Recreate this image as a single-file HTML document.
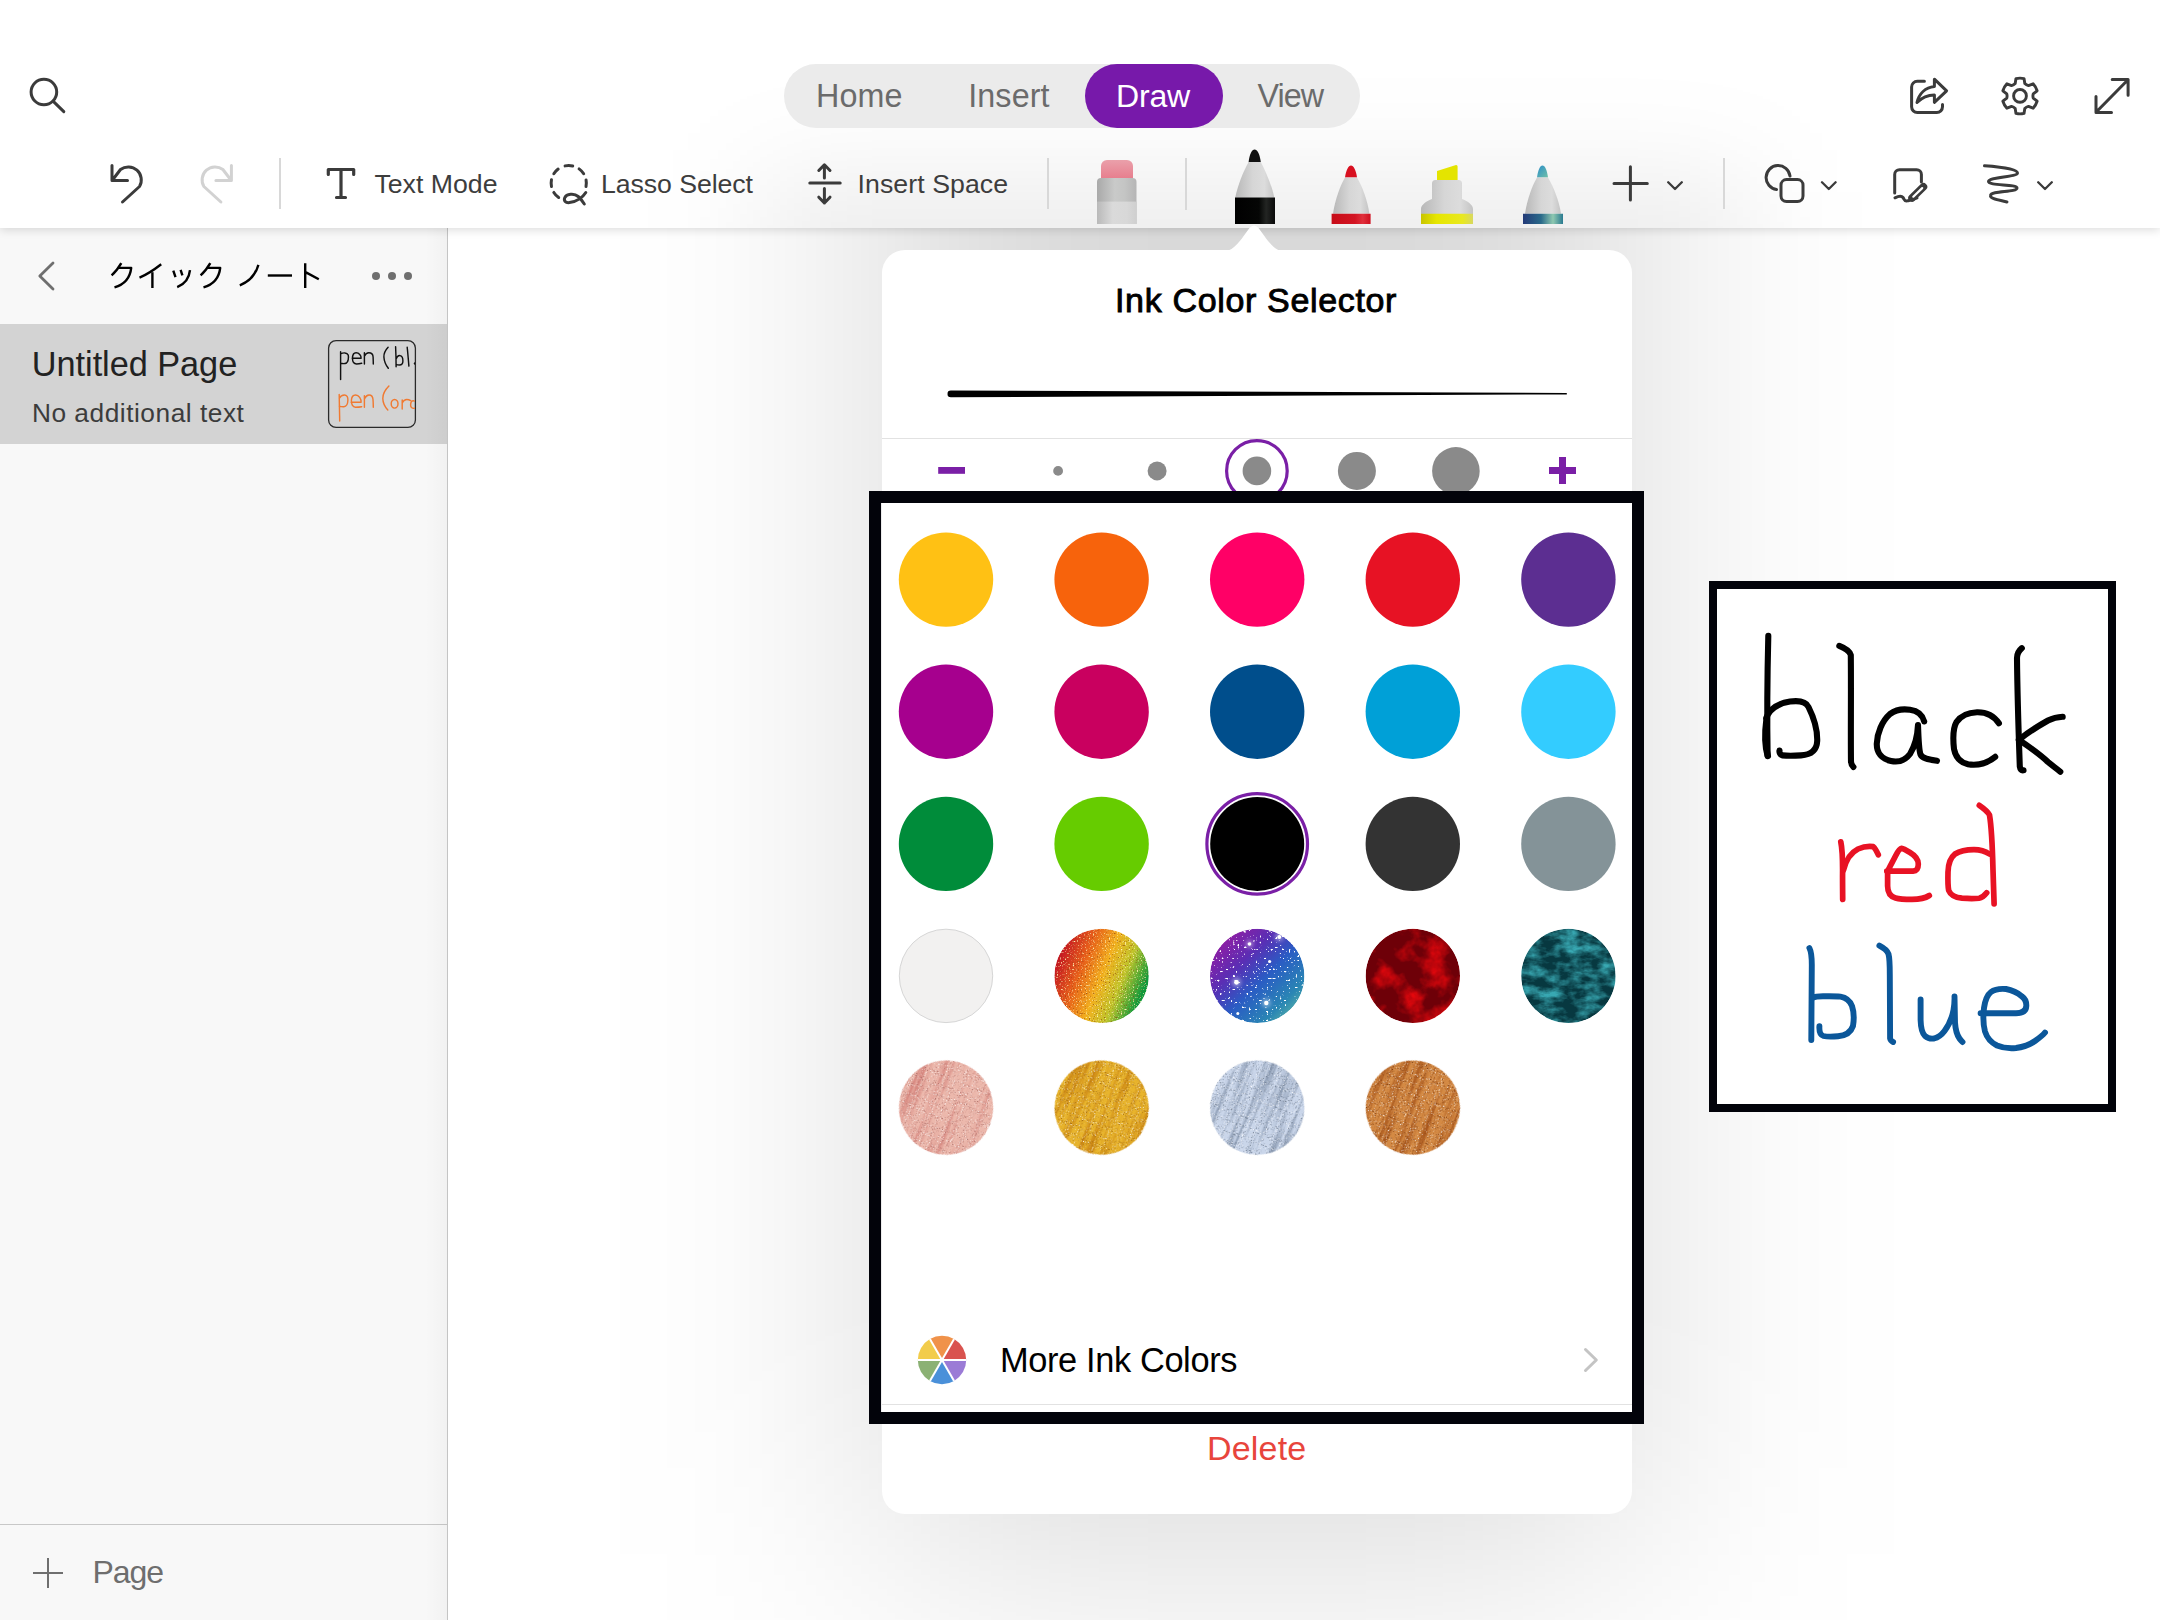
<!DOCTYPE html>
<html><head><meta charset="utf-8">
<style>
html,body{margin:0;padding:0;width:2160px;height:1620px;overflow:hidden;background:#fff;}
*{box-sizing:border-box;}
.abs{position:absolute;}
#toolbar{position:absolute;left:0;top:0;width:2160px;height:228px;background:#fff;box-shadow:0 2px 9px rgba(0,0,0,0.14);z-index:2;overflow:hidden;}
#haze{position:absolute;left:760px;top:190px;width:990px;height:120px;background:rgba(0,0,0,0.09);filter:blur(60px);}
#sidebar{position:absolute;left:0;top:228px;width:448px;height:1392px;background:#f8f8f8;border-right:1px solid #c4c4c4;z-index:1;}
#sel{position:absolute;left:0;top:96px;width:447px;height:120px;background:#d3d3d3;}
#sep{position:absolute;left:0;top:1296px;width:447px;height:1px;background:#c8c8c8;}
#shadow{position:absolute;left:882px;top:-300px;width:750px;height:1855px;background:rgba(0,0,0,0.15);filter:blur(130px);z-index:1;}
#pop{position:absolute;left:882px;top:250px;width:750px;height:1264px;border-radius:23px;background:#fff;z-index:4;}
svg{position:absolute;left:0;top:0;}
text{font-family:"Liberation Sans",sans-serif;}
</style></head>
<body>
<div id="toolbar"><div id="haze"></div></div>
<div id="sidebar"><div id="sel"></div><div id="sep"></div><div style="position:absolute;right:0;top:0;width:22px;height:1392px;background:linear-gradient(to right,rgba(0,0,0,0),rgba(0,0,0,0.028))"></div></div>
<div id="shadow"></div>
<div id="pop"></div>

<svg width="2160" height="1620" viewBox="0 0 2160 1620" style="z-index:5">

<!-- ===== toolbar icons ===== -->
<g fill="none" stroke="#3b3b3b" stroke-width="3" stroke-linecap="round" stroke-linejoin="round">
<circle cx="43.9" cy="92" r="12.8"/>
<path d="M53.3,101.4 L63.8,111.6"/>
<path d="M112,165.5 V180.5 H127.5 M112.5,180 L120.5,169.5 A13,13 0 0 1 139.5,186.5 L122.5,202"/>
<path d="M328.3,174.5 V169.5 H353.7 V174.5 M341,169.5 V197.5 M336.5,197.5 H345.5" stroke-width="3.2"/>
<path d="M565.09,165.88 A17.6,17.6 0 0 1 572.71,165.95 M579.10,168.86 A17.6,17.6 0 0 1 583.68,173.77 M586.08,180.04 A17.6,17.6 0 0 1 586.03,186.46 M553.82,173.77 A17.6,17.6 0 0 1 558.16,169.04 M551.47,186.46 A17.6,17.6 0 0 1 551.47,179.74 M558.66,197.52 A17.6,17.6 0 0 1 553.82,192.43"/>
<path d="M824.4,165 V178 M818.8,170.5 L824.4,164.8 L830,170.5 M809.8,183.1 H840.2 M824.4,188.5 V203 M818.8,197.2 L824.4,203 L830,197.2"/>
<path d="M1614,183.4 H1647.3 M1630.4,166.8 V200"/>
<path d="M1668.2,182.2 L1675,189 L1681.8,182.2 M1822,182.2 L1828.8,189 L1835.6,182.2 M2038.2,182.2 L2045,189 L2051.8,182.2" stroke-width="2.3"/>
<path d="M1776.5,189.5 A12,12 0 1 1 1790,176"/>
<rect x="1781" y="179.6" width="22" height="22" rx="5.5"/>
<path d="M1921.4,182 V174.5 A4.8,4.8 0 0 0 1916.6,169.7 H1899.5 A4.8,4.8 0 0 0 1894.7,174.5 V193"/>
<path d="M1895,197.8 C1898.5,196 1901.5,195.5 1903,197.5 C1904.5,199.5 1904,201.5 1907.5,200.8 C1911,200 1914,199.5 1917,198"/>
<path d="M1912,198 L1923.5,186.8" stroke-width="7.5"/>
<path d="M1913.3,196.7 L1922.2,188.1" stroke="#fff" stroke-width="2.2"/>
<path d="M1984.5,165.8 C2003,167 2017.5,169.5 2017.5,173 C2017.5,177 1989,177 1988.5,181.5 C1988,186 2017,184 2017,188 C2017,192.5 1991,190.5 1990.5,195.5 C1990,199 1999,200 2007,202"/>
<path d="M1924.4,81.3 H1917.3 A5.7,5.7 0 0 0 1911.6,87 V106.8 A5.7,5.7 0 0 0 1917.3,112.5 H1936.8 A5.7,5.7 0 0 0 1942.5,106.8 V104.5"/>
<path d="M1917,102.5 C1919,93.5 1925.5,87.5 1934.4,86.5 V79.2 L1946.6,90.8 L1934.4,102.3 V95 C1927,95 1921.5,98 1917,102.5 Z"/>
<path d="M2015.20,83.49 L2015.97,78.56 A17.9,17.9 0 0 1 2024.03,78.56 L2024.80,83.49 A7.2,7.2 0 0 0 2028.43,85.59 L2028.43,85.59 L2033.09,83.79 A17.9,17.9 0 0 1 2037.12,90.77 L2033.24,93.90 A7.2,7.2 0 0 0 2033.24,98.10 L2033.24,98.10 L2037.12,101.23 A17.9,17.9 0 0 1 2033.09,108.21 L2028.43,106.41 A7.2,7.2 0 0 0 2024.80,108.51 L2024.80,108.51 L2024.03,113.44 A17.9,17.9 0 0 1 2015.97,113.44 L2015.20,108.51 A7.2,7.2 0 0 0 2011.57,106.41 L2011.57,106.41 L2006.91,108.21 A17.9,17.9 0 0 1 2002.88,101.23 L2006.76,98.10 A7.2,7.2 0 0 0 2006.76,93.90 L2006.76,93.90 L2002.88,90.77 A17.9,17.9 0 0 1 2006.91,83.79 L2011.57,85.59 A7.2,7.2 0 0 0 2015.20,83.49 Z" stroke-width="2.9"/>
<circle cx="2020" cy="95.9" r="6.4" stroke-width="2.9"/>
<path d="M2096.5,111.8 L2127.5,80.2 M2112.2,79.6 H2128.1 V95.2 M2096,96.6 V112.4 H2111.5"/>
</g>
<path d="M231.4,165.5 V180.5 H215.9 M230.9,180 L222.9,169.5 A13,13 0 0 0 203.9,186.5 L220.9,202" fill="none" stroke="#d2d2d2" stroke-width="3" stroke-linecap="round" stroke-linejoin="round"/>
<path d="M585.8,192.5 C582,198.5 575,201.8 569.5,202.6 C565.5,203.2 563.5,200.5 564.8,197.6 C566.5,194 574,192.8 578.2,196.5 C580.5,198.6 582.6,201.4 584.3,204" fill="none" stroke="#3b3b3b" stroke-width="3" stroke-linecap="round"/>
<g fill="#d8d8d8">
<rect x="279" y="158" width="2" height="51"/>
<rect x="1047" y="158" width="2" height="51"/>
<rect x="1185" y="158" width="2" height="52"/>
<rect x="1723" y="158" width="2" height="51"/>
</g>

<!-- ===== pens ===== -->
<defs>
<linearGradient id="gEr" x1="0" y1="0" x2="1" y2="0">
<stop offset="0" stop-color="#a9a9a9"/><stop offset="0.45" stop-color="#c9cac9"/><stop offset="0.7" stop-color="#c4c5c4"/><stop offset="1" stop-color="#b5b5b5"/></linearGradient>
<linearGradient id="gEr2" x1="0" y1="0" x2="1" y2="0">
<stop offset="0" stop-color="#b9b9b9"/><stop offset="0.4" stop-color="#dadada"/><stop offset="0.75" stop-color="#d8d8d8"/><stop offset="1" stop-color="#cfcfcf"/></linearGradient>
<linearGradient id="gPink" x1="0" y1="0" x2="0" y2="1">
<stop offset="0" stop-color="#eaa0aa"/><stop offset="1" stop-color="#e77d8d"/></linearGradient>
<linearGradient id="gCone" x1="0" y1="0" x2="1" y2="0">
<stop offset="0" stop-color="#b8b8b8"/><stop offset="0.45" stop-color="#d6d6d6"/><stop offset="0.75" stop-color="#dcdcdc"/><stop offset="1" stop-color="#c4c4c4"/></linearGradient>
<linearGradient id="gBlk" x1="0" y1="0" x2="1" y2="0">
<stop offset="0" stop-color="#000"/><stop offset="0.6" stop-color="#050605"/><stop offset="0.78" stop-color="#232523"/><stop offset="1" stop-color="#0a0a0a"/></linearGradient>
<linearGradient id="gRed" x1="0" y1="0" x2="1" y2="0">
<stop offset="0" stop-color="#c70c18"/><stop offset="0.6" stop-color="#d31523"/><stop offset="0.8" stop-color="#e0303c"/><stop offset="1" stop-color="#cf1020"/></linearGradient>
<linearGradient id="gYel" x1="0" y1="0" x2="1" y2="0">
<stop offset="0" stop-color="#c8c400"/><stop offset="0.3" stop-color="#e6e600"/><stop offset="0.8" stop-color="#e8e820"/><stop offset="1" stop-color="#d8d860"/></linearGradient>
<linearGradient id="gGal" x1="0" y1="0" x2="1" y2="0">
<stop offset="0" stop-color="#233a78"/><stop offset="0.45" stop-color="#2a6a8a"/><stop offset="0.75" stop-color="#8ec8b0"/><stop offset="1" stop-color="#2a7a90"/></linearGradient>
<linearGradient id="gGalTip" x1="0" y1="0" x2="1" y2="1">
<stop offset="0" stop-color="#2a8ec8"/><stop offset="1" stop-color="#70c0a8"/></linearGradient>
</defs>
<path d="M1101,179 V166 A6,6 0 0 1 1107,160 H1127 A6,6 0 0 1 1133,166 V179 Z" fill="url(#gPink)"/>
<path d="M1097,224 V182 A4,4 0 0 1 1101,178 H1132.5 A4,4 0 0 1 1136.5,182 V224 Z" fill="url(#gEr)"/>
<rect x="1097" y="201.6" width="39.5" height="22.4" fill="url(#gEr2)"/>
<path d="M1248.6,162.2 C1249.5,154 1252,149.5 1254.6,149.5 C1257.2,149.5 1259.8,154 1260.8,162.2 Z" fill="#111"/>
<path d="M1248.6,162 H1260.8 C1266,172 1272,186 1274.3,197.8 H1235.2 C1237.5,186 1243,172 1248.6,162 Z" fill="url(#gCone)"/>
<rect x="1235" y="197.5" width="40" height="26.5" fill="url(#gBlk)"/>
<path d="M1345,177.5 C1346,170 1348.5,165.5 1351,165.5 C1353.5,165.5 1356,170 1357,177.5 Z" fill="#d81020"/>
<path d="M1345,177.5 H1357 C1362,186 1367.5,200 1369.4,213.8 H1333 C1335,200 1340,186 1345,177.5 Z" fill="url(#gCone)"/>
<rect x="1331.6" y="213.75" width="39" height="10.25" fill="url(#gRed)"/>
<path d="M1437,180.5 V171 L1456,165 A1.5,1.5 0 0 1 1457.6,166.5 V180.5 Z" fill="#e4e400"/>
<path d="M1432,199 V183.5 A3.5,3.5 0 0 1 1435.5,180 H1458.5 A3.5,3.5 0 0 1 1462,183.5 V199 C1467,201 1473,204.5 1473,209 V214 H1421 V209 C1421,204.5 1427,201 1432,199 Z" fill="url(#gCone)"/>
<rect x="1421" y="213.75" width="52" height="10.25" fill="url(#gYel)"/>
<path d="M1537,177.5 C1538,170 1540,165.5 1542.5,165.5 C1545,165.5 1547,170 1548,177.5 Z" fill="url(#gGalTip)"/>
<path d="M1537,177.5 H1548 C1553,186 1559,200 1561,213.8 H1525 C1527,200 1532,186 1537,177.5 Z" fill="url(#gCone)"/>
<rect x="1523" y="213.75" width="40" height="10.25" fill="url(#gGal)"/>

<!-- ===== sidebar ===== -->
<path d="M53,263 L39.8,276 L53,289" fill="none" stroke="#6f6f6f" stroke-width="2.8" stroke-linecap="round" stroke-linejoin="round"/>
<g fill="none" stroke="#000" stroke-width="2.4" stroke-linecap="butt" stroke-linejoin="round">
<path d="M121.3,263.2 C118.5,268 115,272.5 111.6,275.4"/>
<path d="M118,267.9 H131.2 C130,279 123.5,284.8 114.5,287.4"/>
<path d="M161.2,264.2 C154,269.8 147,274.5 139.5,277.6"/>
<path d="M152.4,272.2 V288"/>
<path d="M173.3,270.7 L175.5,277.2 M180.6,269.8 L182.4,275.4"/>
<path d="M190,270.2 C189,280 184,284.5 177.2,287.2"/>
<path d="M210.3,263.2 C207.5,268 204,272.5 200.6,275.4"/>
<path d="M207,267.9 H220.2 C219,279 212.5,284.8 203.5,287.4"/>
<path d="M258.4,264.8 C255.5,275 250,281.5 239.8,285.3"/>
<path d="M267.8,275.5 H292"/>
<path d="M305.2,263.2 V288 M306,272.4 L318.8,279.2"/>
</g>
<g fill="#6f6f6f"><circle cx="376" cy="276" r="4"/><circle cx="392" cy="276" r="4"/><circle cx="408" cy="276" r="4"/></g>
<defs><clipPath id="thumbClip"><rect x="329" y="341" width="86" height="86" rx="7"/></clipPath></defs>
<rect x="328.6" y="340.6" width="86.8" height="86.8" rx="7.5" fill="none" stroke="#2a2a2a" stroke-width="1.3"/>
<g clip-path="url(#thumbClip)" fill="none" stroke-linecap="round" stroke-linejoin="round" stroke-width="1.45">
<g stroke="#111">
<path d="M340.6,351.7 V379.4 M340.6,353.9 C343,352.6 347,352.2 348.2,355 C349,358 348,362 346.5,363 C345,363.8 342,363.6 340.6,363.3"/>
<path d="M352.2,358.3 H361.1 C361.3,355.5 359,352.8 356.1,352.8 C353.5,352.8 352.5,355.5 352.5,358.5 C352.4,362 354,363.9 356.6,363.9 C358.5,363.9 360.3,363.6 361.7,363.3"/>
<path d="M364.4,352.8 V363.9 M364.4,356.1 C365.5,354 367,352.8 368.8,352.8 C371.5,352.8 373,354 373.1,357 C373.2,359.5 373.3,362 373.3,363.9"/>
<path d="M388.1,347.2 C385,350.5 383.7,353.5 383.9,357 C384.1,361 385.8,365 388.3,368.3"/>
<path d="M395.6,346.7 C395.9,353 396.1,360 396.1,366.7 M396.1,358.9 C397,356.5 398.3,355.4 400,355.6 C402,355.8 402.9,358.5 402.9,361 C402.9,363.5 401.5,365 399.5,365 C398,365 396.8,364.8 396.1,364.4"/>
<path d="M407.2,347.2 C407.8,353 408.4,360 408.9,366.1"/>
<circle cx="415" cy="363.5" r="1.2" fill="#111" stroke="none"/>
</g>
<g stroke="#f07a32">
<path d="M339.2,394.4 C339.4,403 339.6,412 339.7,421.1 M339.2,398.3 C340.5,396 342.5,395 344.4,395 C346.8,395 348,397 347.9,400 C347.8,403.5 346.5,406.5 343.9,406.7 C342,406.8 340.5,406.5 339.2,406.1"/>
<path d="M351.1,402.2 H361.1 C361.2,399 359,395 355.6,395 C352.8,395 351.5,397.5 351.4,400.5 C351.3,404 352.5,407.2 355.5,407.2 C357.8,407.2 360,407 361.7,406.7"/>
<path d="M364.4,395.6 V407.2 M364.4,398.9 C365.6,396.5 367.2,395 369,395 C371.5,395 372.8,396.5 373,399.5 C373.2,402 373.3,405 373.3,407.2"/>
<path d="M388.9,386.1 C385,390 382.7,394 382.8,398.5 C382.9,403 385,407 387.8,410"/>
<ellipse cx="394.6" cy="403.8" rx="3.4" ry="4.3"/>
<path d="M402.2,400 V408.9 M402.2,402.8 C403.5,400.5 405,399.4 406.7,399.4 C408.2,399.4 409.5,399.8 410.6,400.6"/>
<path d="M414.6,401.1 C413,400.6 411.5,401 411,402.5 C410.4,404.5 410.6,406.5 411.5,407.5 C412.5,408.4 413.6,408.5 414.6,408.3"/>
</g>
</g>
<path d="M33,1573 H63 M48,1558 V1588" fill="none" stroke="#6f6f6f" stroke-width="2"/>

<!-- ===== popover ===== -->
<path d="M1221,252.5 C1232,251.5 1238,244 1244,235.5 L1249.5,228 Q1254,222.8 1258.5,228 L1264,235.5 C1270,244 1276,251.5 1287,252.5 Z" fill="#fff"/>
<path d="M950.8,390.6 L1566.8,393 L1566.8,394.4 L950.8,397.2 A3.3,3.3 0 0 1 950.8,390.6 Z" fill="#000"/>
<rect x="882" y="438" width="750" height="1" fill="#e2e2e2"/>
<rect x="938.2" y="467" width="26.8" height="6.8" fill="#7a1fa6"/>
<g fill="#8a8a8a">
<circle cx="1058.1" cy="470.9" r="4.9"/>
<circle cx="1157.1" cy="470.9" r="9.5"/>
<circle cx="1256.9" cy="470.9" r="14.3"/>
<circle cx="1356.9" cy="470.9" r="19"/>
<circle cx="1455.9" cy="470.9" r="23.8"/>
</g>
<circle cx="1256.9" cy="470.9" r="30.3" fill="none" stroke="#7a1fa6" stroke-width="3.2"/>
<path d="M1549,467 H1559 V457 H1566 V467 H1576 V474 H1566 V484 H1559 V474 H1549 Z" fill="#7a1fa6"/>
<rect x="882" y="1404" width="750" height="1" fill="#e2e2e2"/>
<path d="M1585.5,1349.5 L1596.3,1360 L1585.5,1370.5" fill="none" stroke="#c4c4c4" stroke-width="3" stroke-linecap="round" stroke-linejoin="round"/>

<!-- ===== handwriting ===== -->
<rect x="1713" y="585" width="399" height="523" fill="#fff" stroke="#02030a" stroke-width="8"/>
<g fill="none" stroke-linecap="round" stroke-linejoin="round" stroke-width="6.1">
<g stroke="#000">
<path d="M1768.3,635.8 C1767.2,680 1767,720 1767.6,755.2"/>
<path d="M1766.2,718 C1770,708 1778,703.5 1790,701.6 C1800,700.2 1806,702 1808.5,707 C1814,718 1817.5,731 1817.2,741 C1816.8,750 1811,754.8 1801,755.4 C1792,756 1786,755.8 1782.5,755.4 C1780,755 1779.2,752 1779.5,750.5"/>
<path d="M1766.5,720 C1764.5,735 1765.5,748 1767.8,756" stroke-width="6.5"/>
<path d="M1839.3,645.8 C1845,648 1849.5,650.5 1850.8,655 C1851.2,690 1850.6,740 1851,761.8 C1851.2,764.5 1852.5,766 1853.4,767"/>
<path d="M1924.2,721.5 C1922.5,715 1918.5,711 1910,709.8 C1902,708.6 1896,709.5 1890,714 C1882,721 1877.2,733 1876.8,743.5 C1876.4,753 1882,759 1891,761 C1898,762.5 1905,760.5 1910,754 C1915,746 1917.5,736 1918,725 C1918.5,740 1918.8,750 1920.5,754.5 C1922,758 1927,759.3 1937,760.8"/>
<path d="M1998.9,723.2 C1994,716 1986,712 1977,712.2 C1968,712.5 1961,715.5 1956.5,722 C1953,728 1953,740 1954,749 C1955.5,757 1960.5,762.5 1968,764.3 C1978,766 1988,762.5 1995.2,756.8"/>
<path d="M2021.8,648.2 C2018.5,651 2017,654 2017,658 C2017.3,690 2018.5,730 2019.8,766.5 C2020.2,769 2021.5,770.5 2023.5,770.3"/>
<path d="M2062.7,716.8 C2058,717 2053,718 2048,720.5 C2040,725 2028,732.5 2018.8,739.8 C2028,746 2040,754.5 2048,762 C2052,765.5 2056,768 2060.3,771.8"/>
</g>
<g stroke="#e81224" stroke-width="5.7">
<path d="M1840.8,841.8 C1842.5,850 1842.6,860 1842.6,870 C1842.5,880 1842.6,890 1842.7,899.4"/>
<path d="M1843.5,870 C1845.5,862 1850,853 1858,849 C1864,846.3 1869,846 1873.2,846.6 C1875.5,848.5 1877,852 1878.3,854.8"/>
<path d="M1886.8,871.2 H1913 C1917,871 1918.3,868.5 1918.3,864 C1918.3,859 1915,855.5 1910,852.5 C1906,850 1903,848.5 1901.5,848.3 C1899.5,848.5 1898,851 1895.5,856 C1892.5,862 1889.5,867 1887.6,871.5 V886 C1887.6,892 1890,896.5 1895.5,898 C1899,899 1905,899.4 1912,899.4 C1920,899.4 1925.5,898 1929.3,895.5"/>
<path d="M1989.4,854 C1985,851 1980,849.6 1974,849.6 C1966,849.6 1960,850.8 1955,854 C1950,858 1948.2,864 1948,872 C1947.8,880 1948,887 1948.7,890.5 C1950.5,895 1955,897.5 1962,898.2 C1970,898.8 1976,898.6 1979,898.2 C1983,897.5 1985,895 1986.7,892.8"/>
<path d="M1979.3,805.3 C1984,808.5 1987.5,811 1989.5,815 C1992,830 1992.5,850 1993,870 C1993.5,885 1993.8,895 1994.1,903.9"/>
</g>
<g stroke="#0b579a" stroke-width="5.9">
<path d="M1809.4,948 C1811.5,952 1811.8,958 1811.8,965 C1811.6,990 1811.4,1015 1811.3,1040"/>
<path d="M1812.5,997.8 C1815,996.6 1818,996.3 1823,996.3 C1830,996.2 1836,996.2 1840.5,996.6 C1846,997.5 1850,1001 1852,1006 C1854,1012 1854,1020 1853,1026 C1851,1032 1846,1035.5 1838,1036.3 C1832,1036.8 1826,1036.6 1823.5,1036 C1820,1035 1819.2,1030 1819.4,1026.3"/>
<path d="M1879.4,945.6 C1884,948 1887,950 1888.5,954 C1889.8,959 1889.8,966 1889.8,975 C1889.9,1000 1889.9,1025 1890.1,1038.5 C1890.5,1040.5 1892,1041.5 1893.1,1042"/>
<path d="M1920.6,999.4 V1020 C1920.8,1028 1922,1033 1925,1036 C1928,1038.5 1931,1039 1934,1038.5 C1938,1037.5 1941.5,1035 1944.5,1031 C1949,1025 1952,1018 1953.5,1010 C1954.5,1004 1954.6,999 1954.5,996.5 C1954.7,1005 1954.8,1015 1955,1022.5 C1955.5,1030 1957,1035 1959.5,1038.5 C1960.5,1040 1961.5,1041 1962.5,1042"/>
<path d="M1980.6,1013.2 H2016 C2022,1013.2 2026,1011.5 2026.3,1006 C2026.5,1002 2025.5,999 2022,996.5 C2018,993 2012,990 2006,989 C2000,988.5 1995,989 1991,992 C1987,995 1985,1001 1984,1008 C1983,1016 1983.3,1025 1985,1031.5 C1987,1038 1991,1042.5 1997,1045.5 C2003,1048 2010,1048.6 2016,1048 C2024,1047 2030,1044.5 2035,1041 C2040,1037.5 2043,1035 2045,1032.5"/>
</g>
</g>
<!-- ===== palette ===== -->
<defs>
<linearGradient id="gRain" x1="0" y1="0.25" x2="1" y2="0.65">
<stop offset="0.05" stop-color="#c41424"/><stop offset="0.3" stop-color="#e8601a"/><stop offset="0.52" stop-color="#f2b01e"/><stop offset="0.72" stop-color="#c0c42a"/><stop offset="0.95" stop-color="#0e9a3c"/></linearGradient>
<linearGradient id="gGalx" x1="0" y1="0" x2="1" y2="1">
<stop offset="0.08" stop-color="#9a1aa0"/><stop offset="0.35" stop-color="#5a2eb4"/><stop offset="0.55" stop-color="#2a5cc4"/><stop offset="0.78" stop-color="#2a86b4"/><stop offset="0.98" stop-color="#72c8a0"/></linearGradient>
<filter id="fGlit" x="0" y="0" width="1" height="1" color-interpolation-filters="sRGB">
<feTurbulence type="fractalNoise" baseFrequency="0.75" numOctaves="1" seed="4" result="n"/>
<feColorMatrix in="n" type="matrix" values="0 0 0 0 1  0 0 0 0 0.95  0 0 0 0 0.7  5 0 0 0 -2.9" result="w"/>
<feColorMatrix in="n" type="matrix" values="0 0 0 0 0.55  0 0 0 0 0.25  0 0 0 0 0.05  0 -4 0 0 1.6" result="k"/>
<feMerge result="m"><feMergeNode in="SourceGraphic"/><feMergeNode in="k"/><feMergeNode in="w"/></feMerge>
<feComposite in="m" in2="SourceAlpha" operator="in"/>
</filter>
<filter id="fStars" x="0" y="0" width="1" height="1" color-interpolation-filters="sRGB">
<feTurbulence type="fractalNoise" baseFrequency="0.45" numOctaves="1" seed="11" result="n"/>
<feColorMatrix in="n" type="matrix" values="0 0 0 0 1  0 0 0 0 1  0 0 0 0 1  14 0 0 0 -9.2" result="w"/>
<feMerge result="m"><feMergeNode in="SourceGraphic"/><feMergeNode in="w"/></feMerge>
<feComposite in="m" in2="SourceAlpha" operator="in"/>
</filter>
<filter id="fMarbleR" x="0" y="0" width="1" height="1" color-interpolation-filters="sRGB">
<feTurbulence type="fractalNoise" baseFrequency="0.04" numOctaves="4" seed="21" result="n"/>
<feColorMatrix in="n" type="matrix" values="0 0 0 0 0.92  0 0 0 0 0.03  0 0 0 0 0.05  2.6 0 0 0 -1.15" result="b"/>
<feMerge result="m"><feMergeNode in="SourceGraphic"/><feMergeNode in="b"/></feMerge>
<feComposite in="m" in2="SourceAlpha" operator="in"/>
</filter>
<filter id="fMarbleT" x="0" y="0" width="1" height="1" color-interpolation-filters="sRGB">
<feTurbulence type="fractalNoise" baseFrequency="0.05 0.09" numOctaves="4" seed="33" result="n"/>
<feColorMatrix in="n" type="matrix" values="0 0 0 0 0.22  0 0 0 0 0.66  0 0 0 0 0.7  2.6 0 0 0 -1.0" result="b"/>
<feMerge result="m"><feMergeNode in="SourceGraphic"/><feMergeNode in="b"/></feMerge>
<feComposite in="m" in2="SourceAlpha" operator="in"/>
</filter>
<filter id="fMetRose" x="0" y="0" width="1" height="1" color-interpolation-filters="sRGB">
<feTurbulence type="fractalNoise" baseFrequency="0.012 0.2" numOctaves="3" seed="5" result="n0"/>
<feColorMatrix in="n0" type="matrix" values="0 0 0 0 0.847  0 0 0 0 0.533  0 0 0 0 0.502  2.4 0 0 0 -1.05" result="d"/>
<feTurbulence type="fractalNoise" baseFrequency="0.9" numOctaves="1" seed="8" result="n1"/>
<feColorMatrix in="n1" type="matrix" values="0 0 0 0 1  0 0 0 0 1  0 0 0 0 1  5 0 0 0 -3" result="w"/>
<feColorMatrix in="n1" type="matrix" values="0 0 0 0 0.678  0 0 0 0 0.427  0 0 0 0 0.402  0 -5 0 0 2.2" result="k"/>
<feMerge result="m"><feMergeNode in="SourceGraphic"/><feMergeNode in="d"/><feMergeNode in="k"/><feMergeNode in="w"/></feMerge>
<feComposite in="m" in2="SourceAlpha" operator="in"/>
</filter>
<filter id="fMetGold" x="0" y="0" width="1" height="1" color-interpolation-filters="sRGB">
<feTurbulence type="fractalNoise" baseFrequency="0.012 0.2" numOctaves="3" seed="5" result="n0"/>
<feColorMatrix in="n0" type="matrix" values="0 0 0 0 0.784  0 0 0 0 0.502  0 0 0 0 0.063  2.4 0 0 0 -1.05" result="d"/>
<feTurbulence type="fractalNoise" baseFrequency="0.9" numOctaves="1" seed="8" result="n1"/>
<feColorMatrix in="n1" type="matrix" values="0 0 0 0 1  0 0 0 0 1  0 0 0 0 1  5 0 0 0 -3" result="w"/>
<feColorMatrix in="n1" type="matrix" values="0 0 0 0 0.627  0 0 0 0 0.402  0 0 0 0 0.050  0 -5 0 0 2.2" result="k"/>
<feMerge result="m"><feMergeNode in="SourceGraphic"/><feMergeNode in="d"/><feMergeNode in="k"/><feMergeNode in="w"/></feMerge>
<feComposite in="m" in2="SourceAlpha" operator="in"/>
</filter>
<filter id="fMetSilv" x="0" y="0" width="1" height="1" color-interpolation-filters="sRGB">
<feTurbulence type="fractalNoise" baseFrequency="0.012 0.2" numOctaves="3" seed="5" result="n0"/>
<feColorMatrix in="n0" type="matrix" values="0 0 0 0 0.533  0 0 0 0 0.596  0 0 0 0 0.690  2.4 0 0 0 -1.05" result="d"/>
<feTurbulence type="fractalNoise" baseFrequency="0.9" numOctaves="1" seed="8" result="n1"/>
<feColorMatrix in="n1" type="matrix" values="0 0 0 0 1  0 0 0 0 1  0 0 0 0 1  5 0 0 0 -3" result="w"/>
<feColorMatrix in="n1" type="matrix" values="0 0 0 0 0.427  0 0 0 0 0.477  0 0 0 0 0.552  0 -5 0 0 2.2" result="k"/>
<feMerge result="m"><feMergeNode in="SourceGraphic"/><feMergeNode in="d"/><feMergeNode in="k"/><feMergeNode in="w"/></feMerge>
<feComposite in="m" in2="SourceAlpha" operator="in"/>
</filter>
<filter id="fMetBron" x="0" y="0" width="1" height="1" color-interpolation-filters="sRGB">
<feTurbulence type="fractalNoise" baseFrequency="0.012 0.2" numOctaves="3" seed="5" result="n0"/>
<feColorMatrix in="n0" type="matrix" values="0 0 0 0 0.627  0 0 0 0 0.298  0 0 0 0 0.078  2.4 0 0 0 -1.05" result="d"/>
<feTurbulence type="fractalNoise" baseFrequency="0.9" numOctaves="1" seed="8" result="n1"/>
<feColorMatrix in="n1" type="matrix" values="0 0 0 0 1  0 0 0 0 1  0 0 0 0 1  5 0 0 0 -3" result="w"/>
<feColorMatrix in="n1" type="matrix" values="0 0 0 0 0.502  0 0 0 0 0.238  0 0 0 0 0.063  0 -5 0 0 2.2" result="k"/>
<feMerge result="m"><feMergeNode in="SourceGraphic"/><feMergeNode in="d"/><feMergeNode in="k"/><feMergeNode in="w"/></feMerge>
<feComposite in="m" in2="SourceAlpha" operator="in"/>
</filter>
</defs>
<circle cx="946" cy="579.6" r="47.2" fill="#FFC114"/>
<circle cx="1101.6" cy="579.6" r="47.2" fill="#F7630C"/>
<circle cx="1257.2" cy="579.6" r="47.2" fill="#FF0066"/>
<circle cx="1412.8" cy="579.6" r="47.2" fill="#E71224"/>
<circle cx="1568.4" cy="579.6" r="47.2" fill="#5C2E91"/>
<circle cx="946" cy="711.7" r="47.2" fill="#A6008E"/>
<circle cx="1101.6" cy="711.7" r="47.2" fill="#C9005F"/>
<circle cx="1257.2" cy="711.7" r="47.2" fill="#004E8C"/>
<circle cx="1412.8" cy="711.7" r="47.2" fill="#00A0D7"/>
<circle cx="1568.4" cy="711.7" r="47.2" fill="#33CCFF"/>
<circle cx="946" cy="843.9" r="47.2" fill="#008C3A"/>
<circle cx="1101.6" cy="843.9" r="47.2" fill="#66CC00"/>
<circle cx="1257.2" cy="843.9" r="50.3" fill="none" stroke="#7a1fa6" stroke-width="3.2"/>
<circle cx="1257.2" cy="843.9" r="47" fill="#000000"/>
<circle cx="1412.8" cy="843.9" r="47.2" fill="#333333"/>
<circle cx="1568.4" cy="843.9" r="47.2" fill="#849398"/>
<circle cx="946" cy="975.9" r="46.7" fill="#f2f1f0" stroke="#d6d6d6" stroke-width="1"/>
<circle cx="1101.6" cy="975.9" r="47.2" fill="url(#gRain)" filter="url(#fGlit)"/>
<circle cx="1257.2" cy="975.9" r="47.2" fill="url(#gGalx)" filter="url(#fStars)"/>
<g fill="#fff"><circle cx="1249.5" cy="944" r="1.8"/><circle cx="1279.3" cy="937" r="2"/><circle cx="1236.5" cy="982.3" r="2.4"/><circle cx="1266.3" cy="1003" r="2.2"/><circle cx="1269.6" cy="961.5" r="1.6"/><circle cx="1237.8" cy="1013.4" r="1.5"/></g>
<g fill="#fff" opacity="0.45" style="filter:blur(2px)"><circle cx="1249.5" cy="944" r="3.5"/><circle cx="1279.3" cy="937" r="4"/><circle cx="1236.5" cy="982.3" r="4.5"/><circle cx="1266.3" cy="1003" r="4.2"/></g>
<circle cx="1412.8" cy="975.9" r="47.2" fill="#6e0008" filter="url(#fMarbleR)"/>
<circle cx="1568.4" cy="975.9" r="47.2" fill="#073840" filter="url(#fMarbleT)"/>
<circle cx="946" cy="1107.6" r="47.2" fill="#ecb8ac" filter="url(#fMetRose)" transform="rotate(-68 946 1107.6)"/>
<circle cx="1101.6" cy="1107.6" r="47.2" fill="#e8b42c" filter="url(#fMetGold)" transform="rotate(-68 1101.6 1107.6)"/>
<circle cx="1257.2" cy="1107.6" r="47.2" fill="#cad6ea" filter="url(#fMetSilv)" transform="rotate(-68 1257.2 1107.6)"/>
<circle cx="1412.8" cy="1107.6" r="47.2" fill="#d48a44" filter="url(#fMetBron)" transform="rotate(-68 1412.8 1107.6)"/>
<path d="M942,1360 L929.90,1339.04 A24.2,24.2 0 0 1 954.10,1339.04 Z" fill="#f0924a"/>
<path d="M942,1360 L954.10,1339.04 A24.2,24.2 0 0 1 966.20,1360.00 Z" fill="#d9534f"/>
<path d="M942,1360 L966.20,1360.00 A24.2,24.2 0 0 1 954.10,1380.96 Z" fill="#9b7bd6"/>
<path d="M942,1360 L954.10,1380.96 A24.2,24.2 0 0 1 929.90,1380.96 Z" fill="#4a90d9"/>
<path d="M942,1360 L929.90,1380.96 A24.2,24.2 0 0 1 917.80,1360.00 Z" fill="#8bb174"/>
<path d="M942,1360 L917.80,1360.00 A24.2,24.2 0 0 1 929.90,1339.04 Z" fill="#f2cc4b"/>
<path d="M917.80,1360.00 L966.20,1360.00" stroke="#fff" stroke-width="2"/>
<path d="M929.90,1339.04 L954.10,1380.96" stroke="#fff" stroke-width="2"/>
<path d="M954.10,1339.04 L929.90,1380.96" stroke="#fff" stroke-width="2"/>
<rect x="875" y="497" width="763" height="921" fill="none" stroke="#02030a" stroke-width="12"/>
<!-- toolbar text -->
<rect x="784" y="64" width="576" height="64" rx="32" fill="#ebebeb"/>
<rect x="1085" y="64" width="138" height="64" rx="32" fill="#7719aa"/>
<text x="816" y="106.6" font-size="32.3" letter-spacing="0.13" fill="#6b6b6b">Home</text>
<text x="968.2" y="106.6" font-size="32.3" letter-spacing="0.12" fill="#6b6b6b">Insert</text>
<text x="1116" y="107" font-size="32.1" letter-spacing="-0.2" fill="#fff">Draw</text>
<text x="1257.5" y="106.6" font-size="32.3" letter-spacing="-0.93" fill="#6b6b6b">View</text>
<text x="374.4" y="193.1" font-size="26.7" fill="#3d3d3d">Text Mode</text>
<text x="601" y="193" font-size="26.7" letter-spacing="-0.07" fill="#3d3d3d">Lasso Select</text>
<text x="857.5" y="192.8" font-size="26.7" letter-spacing="0.07" fill="#3d3d3d">Insert Space</text>
<!-- sidebar text -->
<text x="31.8" y="375.8" font-size="34.3" letter-spacing="-0.04" fill="#222">Untitled Page</text>
<text x="31.9" y="422" font-size="26.3" letter-spacing="0.52" fill="#3c3c3c">No additional text</text>
<text x="92.6" y="1582.8" font-size="32" letter-spacing="-1.13" fill="#6e6e6e">Page</text>
<!-- popover text -->
<text x="1115" y="311.8" font-size="34" letter-spacing="0.66" fill="#000" stroke="#000" stroke-width="0.9">Ink Color Selector</text>
<text x="1000" y="1372" font-size="34.4" letter-spacing="-0.38" fill="#000">More Ink Colors</text>
<text x="1207" y="1460.3" font-size="34" letter-spacing="0.18" fill="#e8453c">Delete</text>
</svg>
</body></html>
